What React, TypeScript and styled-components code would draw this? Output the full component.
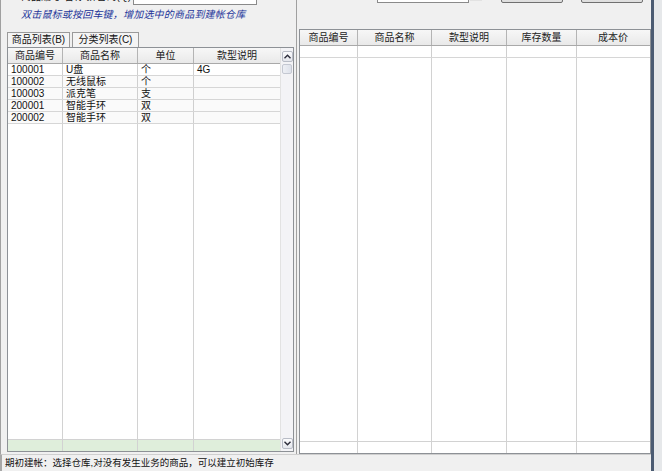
import React from 'react';
import styled, { createGlobalStyle } from 'styled-components';

const GlobalStyle = createGlobalStyle`
  html, body {
    margin: 0;
    padding: 0;
    background: #f0f0f0;
  }
  body {
    font-family: "Liberation Sans", "Noto Sans CJK SC", sans-serif;
  }
`;

type Product = { code: string; name: string; unit: string; spec: string };

const PRODUCTS: Product[] = [
  { code: '100001', name: 'U盘', unit: '个', spec: '4G' },
  { code: '100002', name: '无线鼠标', unit: '个', spec: '' },
  { code: '100003', name: '派克笔', unit: '支', spec: '' },
  { code: '200001', name: '智能手环', unit: '双', spec: '' },
  { code: '200002', name: '智能手环', unit: '双', spec: '' },
];

const LEFT_COLS = '55px 75px 56px 86px';
const RIGHT_COLS = '58px 74px 75px 70px 72px';

const Window = styled.div`
  width: 662px;
  height: 471px;
  display: flex;
  overflow: hidden;
  background: #f0f0f0;
  font-size: 10px;
  color: #111;
`;

const Main = styled.div`
  width: 651px;
  display: flex;
  flex-direction: column;
`;

const FrameEdge = styled.div`
  flex: 1;
  border-left: 3px solid #4b5b72;
  background: #e6e8ea;
`;

const Body = styled.div`
  flex: 1;
  min-height: 0;
  display: flex;
`;

/* left pane: search, hint, tabs and product list */
const LeftPane = styled.section`
  width: 297px;
  flex-shrink: 0;
  box-sizing: border-box;
  border-left: 1px solid #a0a0a0;
  border-right: 1px solid #a0a0a0;
  display: flex;
  flex-direction: column;
`;

const SearchStrip = styled.div`
  height: 6px;
  overflow: hidden;
`;

const SearchRow = styled.div`
  margin-top: -15px;
  height: 20px;
  display: flex;
  align-items: center;
  padding-left: 20px;
`;

const SearchLabel = styled.span`
  width: 112px;
  font-size: 10px;
  white-space: nowrap;
`;

const SearchInput = styled.div`
  width: 122px;
  height: 18px;
  background: #fff;
  border: 1px solid #8a8a8a;
`;

const Hint = styled.div`
  margin-top: 3px;
  padding-left: 20px;
  height: 12px;
  line-height: 12px;
  font-style: italic;
  font-size: 10px;
  letter-spacing: 0.2px;
  color: #23359a;
  white-space: nowrap;
`;

const TabStrip = styled.div`
  margin-top: 11px;
  padding-left: 6px;
  display: flex;
  gap: 2px;
  height: 15px;
`;

const Tab = styled.div<{ $w: number }>`
  width: ${(p) => p.$w}px;
  box-sizing: border-box;
  border: 1px solid #9a9a9a;
  border-bottom: none;
  background: ${(p) => (p.$w ? '#f4f4f4' : '#f0f0f0')};
  line-height: 14px;
  text-align: center;
  font-size: 10px;
  white-space: nowrap;
`;

const ListBox = styled.div`
  flex: 1;
  min-height: 0;
  margin: 0 2px 2px 6px;
  border: 1px solid #8d9196;
  background: #fff;
  display: flex;
`;

const TableArea = styled.div`
  flex: 1;
  display: flex;
  flex-direction: column;
  min-width: 0;
`;

const HeadRow = styled.div<{ $cols: string }>`
  display: grid;
  grid-template-columns: ${(p) => p.$cols};
  height: 15px;
  background: linear-gradient(#f7f7f7, #e9e9e9);
  border-bottom: 1px solid #a9a9a9;
`;

const HeadCell = styled.div`
  border-right: 1px solid #b4b4b4;
  text-align: center;
  line-height: 15px;
  font-size: 10px;
  color: #222;
  white-space: nowrap;
  &:last-child {
    border-right: none;
  }
`;

const Row = styled.div<{ $cols: string; $tone?: string }>`
  display: grid;
  grid-template-columns: ${(p) => p.$cols};
  height: 11px;
  border-bottom: 1px solid #d6d6d6;
  background: ${(p) => p.$tone ?? '#fff'};
`;

const Cell = styled.div`
  border-right: 1px solid #cfcfcf;
  padding-left: 3px;
  line-height: 12px;
  font-size: 10px;
  white-space: nowrap;
  overflow: hidden;
  &:last-child {
    border-right: none;
  }
`;

const Filler = styled.div<{ $cols: string }>`
  flex: 1;
  display: grid;
  grid-template-columns: ${(p) => p.$cols};
`;

const FillCell = styled.div`
  border-right: 1px solid #d2d2d2;
  &:last-child {
    border-right: none;
  }
`;

const FooterRow = styled.div<{ $cols: string; $tone: string }>`
  display: grid;
  grid-template-columns: ${(p) => p.$cols};
  height: 11px;
  background: ${(p) => p.$tone};
  border-top: 1px solid #d2d2d2;
`;

const ScrollBar = styled.div`
  width: 13px;
  border-left: 1px solid #e2e2e2;
  background: #f3f3f6;
  display: flex;
  flex-direction: column;
  align-items: center;
  padding: 3px 0 2px;
  box-sizing: border-box;
`;

const ScrollButton = styled.div`
  width: 11px;
  height: 11px;
  box-sizing: border-box;
  border: 1px solid #b8bcc6;
  border-radius: 2px;
  background: linear-gradient(#fbfbfd, #e4e6ec);
  display: flex;
  align-items: center;
  justify-content: center;
`;

const Thumb = styled.div`
  margin-top: 2px;
  width: 10px;
  height: 10px;
  box-sizing: border-box;
  border: 1px solid #c4c8d2;
  border-radius: 2px;
  background: linear-gradient(90deg, #eef0f5, #dde1ea);
`;

const Track = styled.div`
  flex: 1;
`;

/* right pane: warehouse toolbar and stock grid */
const RightPane = styled.section`
  flex: 1;
  display: flex;
  flex-direction: column;
`;

const ToolStrip = styled.div`
  height: 29px;
  overflow: hidden;
`;

const ToolRow = styled.div`
  margin-top: -19px;
  height: 22px;
  display: flex;
  padding-left: 80px;
`;

const Combo = styled.div`
  width: 90px;
  height: 20px;
  background: #fff;
  border: 1px solid #8a8a8a;
`;

const ComboArrow = styled.div`
  width: 12px;
  height: 20px;
  margin-left: 1px;
  background: #e2e2e2;
`;

const ToolButton = styled.div<{ $gap: number }>`
  margin-left: ${(p) => p.$gap}px;
  width: 60px;
  height: 20px;
  border: 1px solid #707070;
  border-radius: 2px;
  background: linear-gradient(#f4f4f4, #dedede);
`;

const StockBox = styled.div`
  flex: 1;
  margin-left: 2px;
  border: 1px solid #8d9196;
  background: #fff;
  display: flex;
  flex-direction: column;
`;

const StatusBar = styled.footer`
  height: 16px;
  border-top: 1px solid #cfcfcf;
  border-left: 2px solid #a8a8a8;
  padding-left: 3px;
  line-height: 15px;
  font-size: 9.5px;
  color: #111;
  white-space: nowrap;
`;

const Chevron = ({ up }: { up?: boolean }) => (
  <svg width="7" height="5" viewBox="0 0 7 5">
    <path
      d={up ? 'M0.5 4.2 L3.5 1.2 L6.5 4.2' : 'M0.5 0.8 L3.5 3.8 L6.5 0.8'}
      fill="none"
      stroke="#2c2c3a"
      strokeWidth="1.4"
    />
  </svg>
);

const LEFT_HEAD = ['商品编号', '商品名称', '单位', '款型说明'];
const RIGHT_HEAD = ['商品编号', '商品名称', '款型说明', '库存数量', '成本价'];

export default function App() {
  return (
    <>
      <GlobalStyle />
      <Window>
        <Main>
          <Body>
            <LeftPane>
              <SearchStrip>
                <SearchRow>
                  <SearchLabel>商品编号/名称/拼音码(Q):</SearchLabel>
                  <SearchInput />
                </SearchRow>
              </SearchStrip>
              <Hint>双击鼠标或按回车键，增加选中的商品到建帐仓库</Hint>
              <TabStrip>
                <Tab $w={63}>商品列表(B)</Tab>
                <Tab $w={67}>分类列表(C)</Tab>
              </TabStrip>
              <ListBox>
                <TableArea>
                  <HeadRow $cols={LEFT_COLS}>
                    {LEFT_HEAD.map((h) => (
                      <HeadCell key={h}>{h}</HeadCell>
                    ))}
                  </HeadRow>
                  {PRODUCTS.map((p, i) => (
                    <Row key={p.code} $cols={LEFT_COLS} $tone={i === 0 ? '#fff' : '#fafafa'}>
                      <Cell>{p.code}</Cell>
                      <Cell>{p.name}</Cell>
                      <Cell>{p.unit}</Cell>
                      <Cell>{p.spec}</Cell>
                    </Row>
                  ))}
                  <Filler $cols={LEFT_COLS}>
                    {LEFT_HEAD.map((h) => (
                      <FillCell key={h} />
                    ))}
                  </Filler>
                  <FooterRow $cols={LEFT_COLS} $tone="#dfeedb">
                    {LEFT_HEAD.map((h) => (
                      <FillCell key={h} />
                    ))}
                  </FooterRow>
                </TableArea>
                <ScrollBar>
                  <ScrollButton>
                    <Chevron up />
                  </ScrollButton>
                  <Thumb />
                  <Track />
                  <ScrollButton>
                    <Chevron />
                  </ScrollButton>
                </ScrollBar>
              </ListBox>
            </LeftPane>

            <RightPane>
              <ToolStrip>
                <ToolRow>
                  <Combo />
                  <ComboArrow />
                  <ToolButton $gap={19} />
                  <ToolButton $gap={18} />
                </ToolRow>
              </ToolStrip>
              <StockBox>
                <HeadRow $cols={RIGHT_COLS}>
                  {RIGHT_HEAD.map((h) => (
                    <HeadCell key={h}>{h}</HeadCell>
                  ))}
                </HeadRow>
                <Row $cols={RIGHT_COLS}>
                  {RIGHT_HEAD.map((h) => (
                    <Cell key={h} />
                  ))}
                </Row>
                <Filler $cols={RIGHT_COLS}>
                  {RIGHT_HEAD.map((h) => (
                    <FillCell key={h} />
                  ))}
                </Filler>
                <FooterRow $cols={RIGHT_COLS} $tone="#fff">
                  {RIGHT_HEAD.map((h) => (
                    <FillCell key={h} />
                  ))}
                </FooterRow>
              </StockBox>
            </RightPane>
          </Body>
          <StatusBar>期初建帐：选择仓库,对没有发生业务的商品，可以建立初始库存</StatusBar>
        </Main>
        <FrameEdge />
      </Window>
    </>
  );
}
